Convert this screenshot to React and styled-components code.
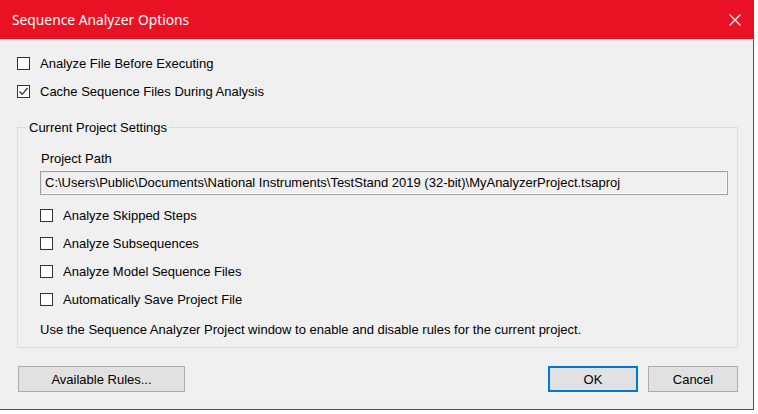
import React from "react";
import styled, { createGlobalStyle } from "styled-components";

const checks = [
  "Analyze Skipped Steps",
  "Analyze Subsequences",
  "Analyze Model Sequence Files",
  "Automatically Save Project File",
];

function CheckBox({ checked, label }) {
  return (
    <CheckRow>
      <Box>
        {checked && (
          <svg width="11" height="11" viewBox="0 0 11 11">
            <path d="M1.5 5.5 L4.2 8.3 L9.5 2" fill="none" stroke="#333" strokeWidth="1.3" />
          </svg>
        )}
      </Box>
      <Label>{label}</Label>
    </CheckRow>
  );
}

export default function App() {
  return (
    <>
      <GlobalStyle />
      <Window>
        <TitleBar>
          <Title>Sequence Analyzer Options</Title>
          <CloseIcon width="12" height="12" viewBox="0 0 12 12">
            <path d="M0.5 0.5 L11.5 11.5 M11.5 0.5 L0.5 11.5" stroke="#fff" strokeWidth="1.2" />
          </CloseIcon>
        </TitleBar>
        <Body>
          <TopChecks>
            <CheckBox label="Analyze File Before Executing" />
            <CheckBox checked label="Cache Sequence Files During Analysis" />
          </TopChecks>
          <Group>
            <Legend>Current Project Settings</Legend>
            <FieldLabel>Project Path</FieldLabel>
            <PathBox>C:\Users\Public\Documents\National Instruments\TestStand 2019 (32-bit)\MyAnalyzerProject.tsaproj</PathBox>
            <GroupChecks>
              {checks.map((c) => (
                <CheckBox key={c} label={c} />
              ))}
            </GroupChecks>
            <Note>Use the Sequence Analyzer Project window to enable and disable rules for the current project.</Note>
          </Group>
          <ButtonBar>
            <Button $wide>Available Rules...</Button>
            <Spacer />
            <Button $default>OK</Button>
            <Button>Cancel</Button>
          </ButtonBar>
        </Body>
      </Window>
    </>
  );
}

const GlobalStyle = createGlobalStyle`
  body {
    margin: 0;
    background: #ffffff;
    font-family: "Liberation Sans", Arial, sans-serif;
  }
`;

const Window = styled.div`
  width: 754px;
  height: 410px;
  box-sizing: border-box;
  background: #f0f0f0;
  border-right: 1px solid #e81224;
  border-bottom: 1px solid #e81224;
  display: flex;
  flex-direction: column;
`;

const TitleBar = styled.div`
  height: 39px;
  flex: none;
  background: #e81224;
  display: flex;
  align-items: center;
  justify-content: space-between;
  padding: 0 12px 0 12px;
`;

const Title = styled.span`
  font-family: "Noto Sans", "Open Sans", sans-serif;
  font-size: 13.8px;
  color: #ffffff;
`;

const CloseIcon = styled.svg`
  display: block;
`;

const Body = styled.div`
  flex: 1;
  display: flex;
  flex-direction: column;
  padding: 17px 15px 0 17px;
`;

const TopChecks = styled.div`
  display: flex;
  flex-direction: column;
  gap: 14px;
`;

const CheckRow = styled.div`
  display: flex;
  align-items: center;
  height: 14px;
`;

const Box = styled.span`
  width: 13px;
  height: 13px;
  box-sizing: border-box;
  border: 1px solid #333333;
  background: #ffffff;
  display: flex;
  align-items: center;
  justify-content: center;
  flex: none;
`;

const Label = styled.span`
  margin-left: 10px;
  font-size: 13px;
  color: #000;
  white-space: nowrap;
`;

const Group = styled.fieldset`
  margin: 22px 0 0 0;
  width: 721px;
  box-sizing: border-box;
  border: 1px solid #dcdcdc;
  padding: 16px 0 4px 22px;
  height: 228px;
`;

const Legend = styled.legend`
  margin-left: -13px;
  padding: 0 2px;
  font-size: 13px;
  color: #000;
`;

const FieldLabel = styled.div`
  font-size: 13px;
  color: #000;
  margin-left: 1px;
`;

const PathBox = styled.div`
  margin-top: 5px;
  width: 688px;
  height: 24px;
  box-sizing: border-box;
  border: 1px solid #a0a0a0;
  box-shadow: inset -1px -1px 0 #ffffff, inset 1px 1px 0 #e3e3e3;
  background: #f0f0f0;
  font-size: 13px;
  line-height: 22px;
  padding-left: 4px;
  white-space: nowrap;
  overflow: hidden;
`;

const GroupChecks = styled.div`
  margin-top: 13px;
  display: flex;
  flex-direction: column;
  gap: 14px;
`;

const Note = styled.div`
  margin-top: 16px;
  font-size: 13px;
  color: #000;
`;

const ButtonBar = styled.div`
  margin-top: 18px;
  display: flex;
  gap: 10px;
  width: 720px;
  padding-left: 1px;
`;

const Spacer = styled.div`
  flex: 1;
`;

const Button = styled.button`
  width: ${(p) => (p.$wide ? "167px" : "90px")};
  height: 26px;
  box-sizing: border-box;
  background: #e1e1e1;
  border: 1px solid ${(p) => (p.$default ? "#0078d7" : "#adadad")};
  box-shadow: ${(p) => (p.$default ? "inset 0 0 0 1px #0078d7" : "none")};
  font-family: "Liberation Sans", Arial, sans-serif;
  font-size: 13px;
  color: #000;
  padding: 0;
`;
